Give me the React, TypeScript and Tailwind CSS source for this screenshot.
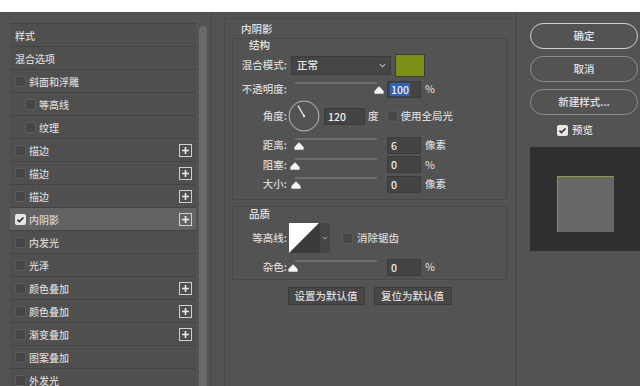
import type { ReactNode } from 'react'

const font = "font-['Noto_Sans_CJK_SC','Noto_Sans',sans-serif]"

interface Row { label: string; indent?: boolean; box?: boolean; on?: boolean; plus?: boolean; active?: boolean }

const rows: Row[] = [
  { label: '样式' },
  { label: '混合选项' },
  { label: '斜面和浮雕', box: true },
  { label: '等高线', box: true, indent: true },
  { label: '纹理', box: true, indent: true },
  { label: '描边', box: true, plus: true },
  { label: '描边', box: true, plus: true },
  { label: '描边', box: true, plus: true },
  { label: '内阴影', box: true, on: true, plus: true, active: true },
  { label: '内发光', box: true },
  { label: '光泽', box: true },
  { label: '颜色叠加', box: true, plus: true },
  { label: '颜色叠加', box: true, plus: true },
  { label: '渐变叠加', box: true, plus: true },
  { label: '图案叠加', box: true },
  { label: '外发光', box: true },
]

function Check({ on }: { on?: boolean }) {
  if (on) {
    return (
      <span className="w-[11px] h-[11px] rounded-[2px] bg-[#e6e6e6] flex items-center justify-center shrink-0">
        <svg viewBox="0 0 12 12" className="w-[9px] h-[9px]"><path d="M2 6.2l2.6 2.6L10 3.2" fill="none" stroke="#2e2e2e" strokeWidth="2" /></svg>
      </span>
    )
  }
  return <span className="block w-[11px] h-[11px] rounded-[2px] bg-[#464646] border border-[#5c5c5c] shrink-0" />
}

function Plus() {
  return (
    <span className="w-[13px] h-[13px] border border-[#cfcfcf] flex items-center justify-center shrink-0 ml-auto mr-[4px]">
      <svg viewBox="0 0 9 9" className="w-[9px] h-[9px]"><path d="M4.5 1v7M1 4.5h7" stroke="#ececec" strokeWidth="1.6" /></svg>
    </span>
  )
}

function Slider({ pos }: { pos: number }) {
  return (
    <div className="relative w-[90px] h-full shrink-0">
      <div className="absolute left-[4px] w-[82px] top-[calc(50%-7px)] h-[2px] bg-[#6d6d6d]" />
      <svg viewBox="0 0 10 8" className="absolute top-[calc(50%-3px)] w-[10px] h-[8px]" style={{ left: pos - 5 }}>
        <path d="M5 0.3 L9.6 5 L9.6 7.7 L0.4 7.7 L0.4 5 Z" fill="#f4f4f4" />
      </svg>
    </div>
  )
}

function Num({ v, w = 'w-[34px]', sel }: { v: string; w?: string; sel?: boolean }) {
  return (
    <div className={`${w} h-[17px] bg-[#444] border border-[#3a3a3a] flex items-center pl-[2px] shrink-0`}>
      <span className={`px-[1px] leading-[13px] text-[#f0f0f0] ${sel ? 'bg-[#2f62b3]' : ''}`}>{v}</span>
    </div>
  )
}

function Label({ children }: { children: ReactNode }) {
  return <div className="w-[54px] text-right shrink-0">{children}</div>
}

function SliderRow({ label, pos, value, unit, h, sel }: { label: string; pos: number; value: string; unit: string; h: string; sel?: boolean }) {
  return (
    <div className={`flex items-center ${h}`}>
      <Label>{label}</Label>
      <div className="ml-[4px] h-full"><Slider pos={pos} /></div>
      <div className="ml-[6px]"><Num v={value} sel={sel} /></div>
      <span className="ml-[4px]">{unit}</span>
    </div>
  )
}

function PillButton({ children, main }: { children: ReactNode; main?: boolean }) {
  return (
    <div className={`w-[108px] h-[26px] rounded-full flex items-center justify-center text-[#e2e2e2] ${main ? 'border-[1.5px] border-[#cfcfcf]' : 'border border-[#8c8c8c]'}`}>
      {children}
    </div>
  )
}

export default function App() {
  return (
    <div className={`w-[640px] h-[386px] overflow-hidden bg-white flex flex-col font-medium ${font}`}>
      <div className="h-[12px] bg-white shrink-0" />
      <div className="flex-1 flex bg-[#535353] text-[#d6d6d6] text-[10.5px] min-h-0">
        {/* style list */}
        <div className="w-[212px] flex pl-[10px] pt-[11px] border-r border-[#474747] shrink-0">
          <div className="w-[186px] flex flex-col border-t border-[#434343] text-[10px]">
            {rows.map((r, i) => (
              <div key={i} className={`h-[23px] shrink-0 flex items-center border-b border-[#434343] ${r.active ? 'bg-[#636363]' : 'bg-[#4f4f4f]'} ${r.indent ? 'pl-[15px]' : 'pl-[5px]'}`}>
                {r.box && <Check on={r.on} />}
                <span className={r.box ? 'ml-[3px]' : ''}>{r.label}</span>
                {r.plus && <Plus />}
              </div>
            ))}
          </div>
          <div className="w-[12px] ml-[1px] pt-[3px] flex justify-center">
            <div className="w-[8px] h-full rounded-t-full bg-[#696969]" />
          </div>
        </div>

        {/* settings */}
        <div className="w-[304px] pl-[12px] pt-[6px] shrink-0 flex flex-col">
          <div className="w-[292px] flex-1 border border-b-0 border-[#4a4a4a] flex flex-col">
            <div className="pt-[3px] pl-[16px] leading-[13px] text-[#e2e2e2]">内阴影</div>
            <div className="ml-[7px] mt-[3px] w-[275px] border border-[#484848] pb-[5px]">
              <div className="pl-[16px] leading-[11px] text-[#e2e2e2]">结构</div>
              <div className="mt-[4px] h-[22px] flex items-center">
                <Label>混合模式:</Label>
                <div className="ml-[4px] w-[100px] h-[19px] bg-[#454545] border border-[#3b3b3b] flex items-center pl-[5px] pr-[4px]">
                  <span className="text-[#e6e6e6]">正常</span>
                  <svg viewBox="0 0 8 5" className="ml-auto w-[7px] h-[5px]"><path d="M1 1l3 3 3-3" fill="none" stroke="#bdbdbd" strokeWidth="1.2" /></svg>
                </div>
                <div className="ml-[4px] w-[30px] h-[23px] bg-[#7c8e14] border border-[#3c3c3c]" />
              </div>
              <div className="mt-[3px]">
                <SliderRow label="不透明度:" pos={88} value="100" unit="%" h="h-[20px]" sel />
              </div>
              <div className="h-[34px] flex items-center">
                <Label>角度:</Label>
                <svg viewBox="0 0 32 32" className="ml-[1px] w-[32px] h-[32px] shrink-0">
                  <circle cx="16" cy="16" r="15" fill="none" stroke="#bcbcbc" strokeWidth="1" />
                  <path d="M16 16 L10 5.6" stroke="#e4e4e4" strokeWidth="1.4" />
                  <circle cx="16" cy="16" r="1.2" fill="#e4e4e4" />
                </svg>
                <div className="ml-[4px]"><Num v="120" w="w-[41px]" /></div>
                <span className="ml-[3px]">度</span>
                <span className="ml-[8px]"><Check /></span>
                <span className="ml-[3px]">使用全局光</span>
              </div>
              <div className="mt-[2px]">
                <SliderRow label="距离:" pos={8} value="6" unit="像素" h="h-[20px]" />
              </div>
              <SliderRow label="阻塞:" pos={4} value="0" unit="%" h="h-[19px]" />
              <SliderRow label="大小:" pos={5} value="0" unit="像素" h="h-[20px]" />
            </div>

            <div className="ml-[7px] mt-[6px] w-[275px] border border-[#484848] pb-[2px]">
              <div className="mt-[1px] pl-[16px] leading-[11px] text-[#e2e2e2]">品质</div>
              <div className="mt-[4px] h-[30px] flex items-center">
                <Label>等高线:</Label>
                <svg viewBox="0 0 30 30" className="ml-[2px] w-[30px] h-[30px] shrink-0">
                  <rect x="0" y="0" width="30" height="30" fill="#3a3a3a" />
                  <path d="M0 0 H30 L0 30 Z" fill="#ffffff" />
                </svg>
                <div className="w-[11px] h-[30px] bg-[#454545] border-l border-[#3a3a3a] flex items-center justify-center">
                  <svg viewBox="0 0 8 5" className="w-[6px] h-[4px]"><path d="M1 1l3 3 3-3" fill="none" stroke="#bdbdbd" strokeWidth="1.2" /></svg>
                </div>
                <span className="ml-[12px]"><Check /></span>
                <span className="ml-[4px]">消除锯齿</span>
              </div>
              <div className="mt-[4px]">
                <SliderRow label="杂色:" pos={2} value="0" unit="%" h="h-[20px]" />
              </div>
            </div>

            <div className="mt-[7px] flex justify-center gap-[9px] pr-[1px]">
              <div className="w-[77px] h-[18px] bg-[#474747] border border-[#3b3b3b] flex items-center justify-center text-[#dcdcdc]">设置为默认值</div>
              <div className="w-[78px] h-[18px] bg-[#474747] border border-[#3b3b3b] flex items-center justify-center text-[#dcdcdc]">复位为默认值</div>
            </div>
          </div>
        </div>

        {/* buttons and preview */}
        <div className="flex-1 pl-[13px] pt-[11px] border-l border-[#494949] flex flex-col">
          <div className="flex flex-col gap-[7px]">
            <PillButton main>确定</PillButton>
            <PillButton>取消</PillButton>
            <PillButton>新建样式...</PillButton>
          </div>
          <div className="mt-[9px] h-[12px] pl-[27px] flex items-center gap-[4px] text-[#e2e2e2]">
            <Check on />
            <span>预览</span>
          </div>
          <div className="mt-[11px] w-[110px] h-[104px] bg-[#2f2f2f] pl-[27px] pt-[29px]">
            <div className="w-[57px] h-[56px] bg-[#676767] border-t border-l border-[#8fa01c]" />
          </div>
        </div>
      </div>
    </div>
  )
}
